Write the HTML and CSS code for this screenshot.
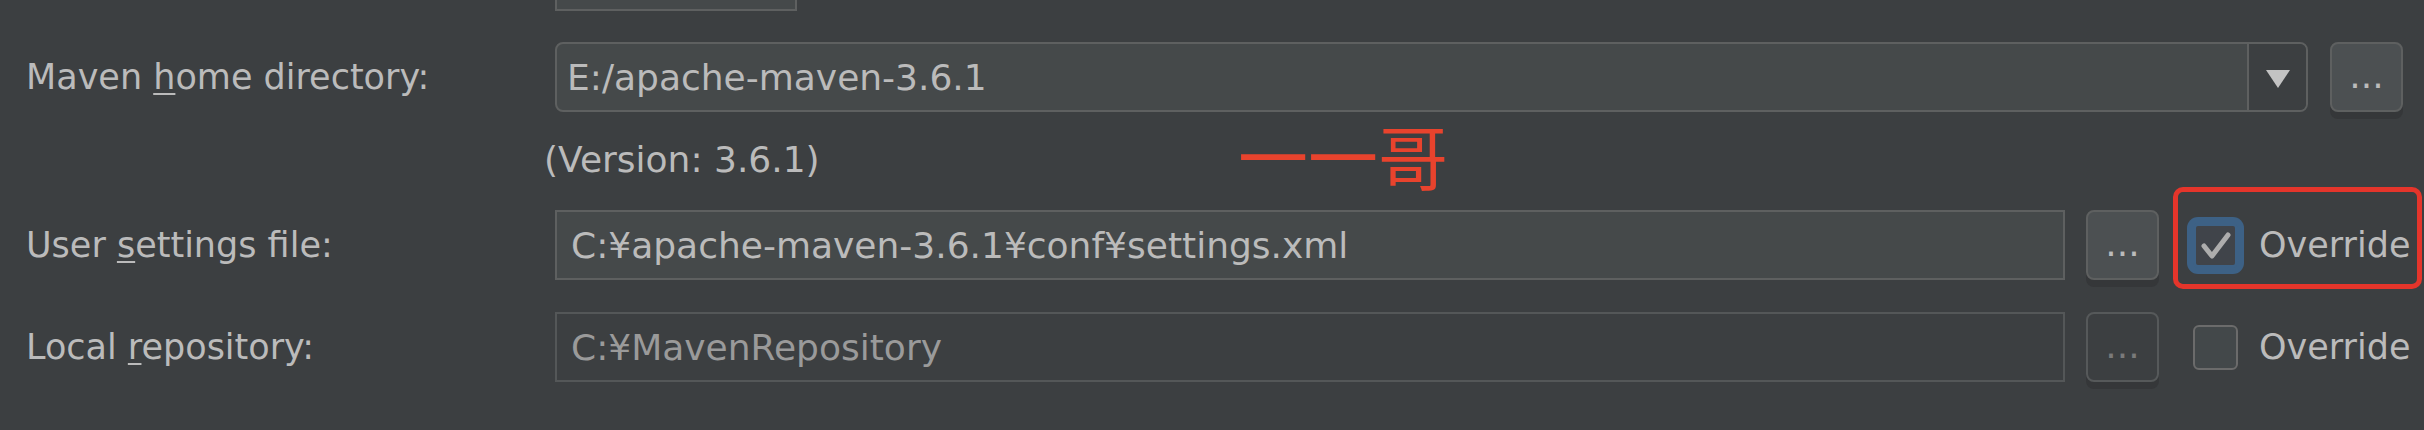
FILE: index.html
```html
<!DOCTYPE html>
<html lang="en">
<head>
<meta charset="utf-8">
<title>Maven settings</title>
<link rel="stylesheet" href="styles.css">
</head>
<body>
<div class="panel">
  <div class="row-stub"><div class="stub"></div></div>

  <div class="row row-home">
    <div class="label">Maven <u>h</u>ome directory:</div>
    <div class="combo">
      <div class="combo-text">E:/apache-maven-3.6.1</div>
      <div class="combo-arrow">
        <svg width="26" height="20" viewBox="0 0 26 20"><path d="M1 1 H25 L13 19 Z" fill="#c3c3c3"/></svg>
      </div>
    </div>
    <div class="browse browse-wide">...</div>
  </div>

  <div class="row-version">
    <div class="version">(Version: 3.6.1)</div>
    <div class="annot">一一哥</div>
  </div>

  <div class="row">
    <div class="label">User <u>s</u>ettings file:</div>
    <div class="field">C:¥apache-maven-3.6.1¥conf¥settings.xml</div>
    <div class="browse">...</div>
    <div class="check-wrap">
      <div class="checkbox checked">
        <svg width="39" height="39" viewBox="0 0 39 39"><path d="M8 20 L16 30 L32 9" fill="none" stroke="#adadad" stroke-width="5" stroke-linecap="round" stroke-linejoin="round"/></svg>
      </div>
      <span class="check-label">Override</span>
      <div class="highlight"></div>
    </div>
  </div>

  <div class="row row-local">
    <div class="label">Local <u>r</u>epository:</div>
    <div class="field field-disabled">C:¥MavenRepository</div>
    <div class="browse browse-disabled">...</div>
    <div class="check-wrap">
      <div class="checkbox"></div>
      <span class="check-label">Override</span>
    </div>
  </div>
</div>
</body>
</html>
```
FILE: styles.css
```css
html, body {
  margin: 0;
  padding: 0;
}
body {
  width: 2424px;
  height: 430px;
  overflow: hidden;
  background: #3c3f41;
  color: #bbbbbb;
  font-family: "DejaVu Sans", Verdana, sans-serif;
}
.panel {
  padding-left: 26px;
}
.row-stub {
  height: 11px;
}
.stub {
  margin-left: 529px;
  width: 242px;
  height: 11px;
  box-sizing: border-box;
  background: #45494a;
  border: 2px solid #5e6060;
  border-top: none;
}
.row {
  display: flex;
  align-items: center;
  height: 70px;
}
.row-home {
  margin-top: 31px;
}
.row-local {
  margin-top: 32px;
}
.label {
  width: 529px;
  flex: none;
  font-size: 35px;
  white-space: nowrap;
}
.label u {
  text-decoration-thickness: 2px;
  text-underline-offset: 4px;
}
.combo {
  width: 1753px;
  height: 70px;
  flex: none;
  box-sizing: border-box;
  display: flex;
  border: 2px solid #5e6060;
  border-radius: 8px;
  background: #45494a;
  overflow: hidden;
}
.combo-text {
  flex: 1;
  display: flex;
  align-items: center;
  padding-left: 10px;
  font-size: 36px;
}
.combo-arrow {
  width: 59px;
  flex: none;
  display: flex;
  align-items: center;
  justify-content: center;
  border-left: 2px solid #5e6060;
  background: #3c3f41;
  padding-top: 4px;
  box-sizing: border-box;
}
.browse {
  width: 73px;
  height: 70px;
  flex: none;
  box-sizing: border-box;
  margin-left: 21px;
  display: flex;
  align-items: center;
  justify-content: center;
  padding-bottom: 3px;
  border: 2px solid #5e6060;
  border-radius: 8px;
  background: #4c5052;
  box-shadow: 0 7px 0 #353739;
  font-size: 36px;
  color: #bbbbbb;
}
.browse-wide {
  margin-left: 22px;
}
.browse-disabled {
  background: #3c3f41;
  border-color: #56595a;
  color: #7a7a7a;
}
.row-version {
  position: relative;
  height: 98px;
}
.version {
  padding-top: 27px;
  margin-left: 518px;
  font-size: 36px;
}
.annot {
  position: absolute;
  left: 1212px;
  top: 8px;
  font-family: "Noto Sans CJK SC", sans-serif;
  font-size: 70px;
  line-height: 70px;
  color: #e8432d;
}
.field {
  width: 1510px;
  height: 70px;
  flex: none;
  box-sizing: border-box;
  display: flex;
  align-items: center;
  padding-left: 14px;
  border: 2px solid #5e6060;
  background: #45494a;
  font-size: 36px;
}
.field-disabled {
  background: #3c3f41;
  border-color: #545758;
  color: #9a9a9a;
}
.check-wrap {
  position: relative;
  align-self: stretch;
  display: flex;
  align-items: center;
  margin-left: 34px;
}
.checkbox {
  width: 45px;
  height: 45px;
  box-sizing: border-box;
  flex: none;
  margin-right: 21px;
  border: 2px solid #6b6b6b;
  border-radius: 6px;
  background: #43484a;
}
.checkbox.checked {
  border: 3px solid #3d6185;
  box-shadow: 0 0 0 6px #3d6185;
  border-radius: 5px;
  background: #40444a;
}
.checkbox svg {
  display: block;
}
.check-label {
  font-size: 35px;
  white-space: nowrap;
}
.highlight {
  position: absolute;
  left: -20px;
  top: -23px;
  width: 249px;
  height: 102px;
  box-sizing: border-box;
  border: 5px solid #e5352b;
  border-radius: 10px;
}
```
